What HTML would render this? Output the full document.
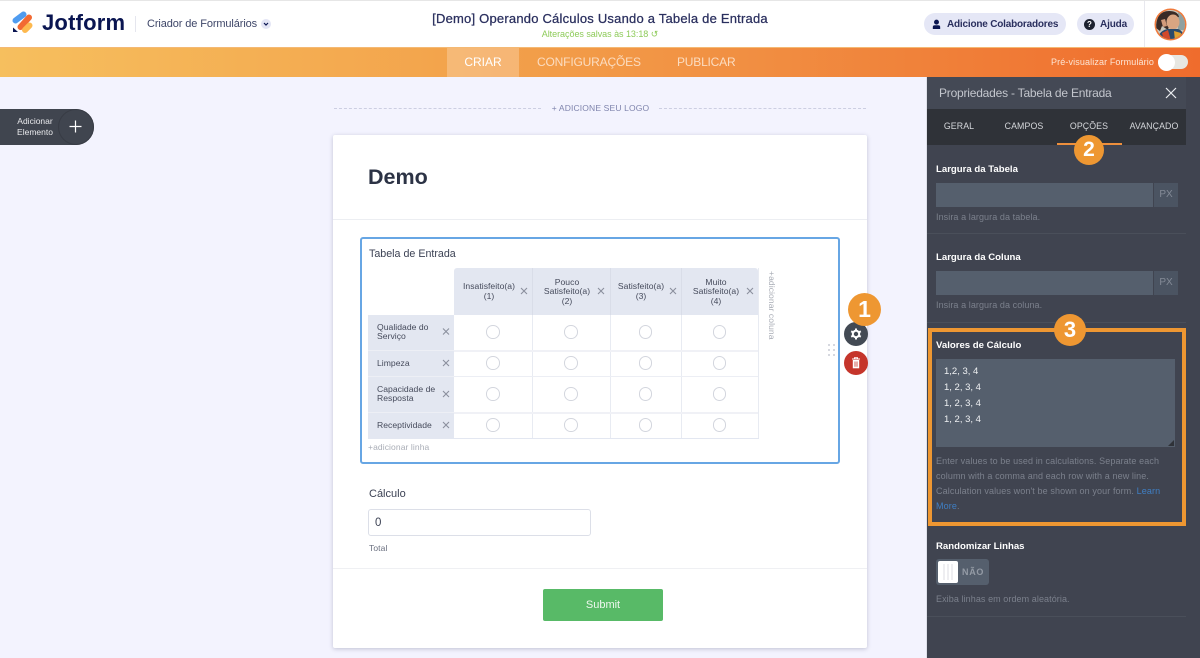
<!DOCTYPE html>
<html><head><meta charset="utf-8">
<style>
*{box-sizing:border-box}
html,body{margin:0;padding:0}
body{width:1200px;height:658px;overflow:hidden;position:relative;background:#f3f3fe;font-family:"Liberation Sans",sans-serif;color:#2c3345}
.a{position:absolute;white-space:nowrap}
.c{text-align:center}
.h{background:#e3e7f1}
.dk{color:#fff;font-weight:bold;font-size:9.6px;letter-spacing:0}
.hint{color:#7b808c;font-size:9px;letter-spacing:.08px}
.inp{background:#555f6d}
.px{background:#4b5462;color:#848b97;font-size:10px;text-align:center;line-height:24px}
.tbl{font-size:8.600px;color:#454a5b;line-height:9.7px;letter-spacing:.03px}
.r{width:13.5px;height:13.5px;border:1px solid #d3d6de;border-radius:50%;background:#fff;position:absolute}
.badge{position:absolute;border-radius:50%;background:#ee9732;color:#fff;font-weight:bold;text-align:center}
.tab{font-size:8.8px;color:#d5d7db;line-height:12px;letter-spacing:.1px;top:119.500px}
</style></head><body>

<!-- top bar -->
<div class="a" style="left:0;top:0;width:1200px;height:47px;background:#fff;border-top:1px solid #e6e6e6"></div>
<svg class="a" style="left:0;top:0" width="40" height="40" viewBox="0 0 40 40">
<path d="M15.500 20.500 L23.500 14.500" stroke="#4f9cf0" stroke-width="6" stroke-linecap="round"/>
<path d="M20.500 27 L29 17.500" stroke="#f26a33" stroke-width="6" stroke-linecap="round"/>
<path d="M25 30 L29.500 25.500" stroke="#fdb94f" stroke-width="6" stroke-linecap="round"/>
<path d="M13 27.500 L13 32 L18 32 Z" fill="#0a1551"/>
</svg>
<div class="a" style="left:42px;top:9px;font-size:22px;font-weight:bold;color:#0a1551;letter-spacing:.2px;line-height:27px">Jotform</div>
<div class="a" style="left:135px;top:16px;width:1px;height:16px;background:#e5e6ee"></div>
<div class="a" style="left:147px;top:17px;font-size:11px;color:#3e4668;letter-spacing:-.11px;line-height:14px">Criador de Formulários</div>
<div class="a" style="left:261px;top:19px;width:10px;height:10px;border-radius:50%;background:#e3e5f5"></div>
<svg class="a" style="left:261px;top:19px" width="10" height="10" viewBox="0 0 10 10"><path d="M3 4 L5 6 L7 4" fill="none" stroke="#0a1551" stroke-width="1.200"/></svg>

<div class="a c" style="left:400px;width:400px;top:11px;font-size:13px;color:#2a2f5e;letter-spacing:.21px;line-height:16px;-webkit-text-stroke:.25px #2a2f5e">[Demo] Operando Cálculos Usando a Tabela de Entrada</div>
<div class="a c" style="left:400px;width:400px;top:28px;font-size:9px;color:#8ecb5a;letter-spacing:-.04px;line-height:12px">Alterações salvas às 13:18 ↺</div>

<div class="a" style="left:924px;top:13px;width:142px;height:22px;border-radius:11px;background:#e5e7f6"></div>
<svg class="a" style="left:932px;top:18.500px" width="9" height="11" viewBox="0 0 11 13"><circle cx="5.500" cy="3.600" r="3" fill="#0a1551"/><path d="M1 12 V9.500 Q1 7.400 3.500 7.400 H7.500 Q10 7.400 10 9.500 V12 Z" fill="#0a1551"/></svg>
<div class="a" style="left:947px;top:18px;font-size:10px;font-weight:bold;color:#2a2f5e;line-height:14px;letter-spacing:-.2px">Adicione Colaboradores</div>
<div class="a" style="left:1077px;top:13px;width:57px;height:22px;border-radius:11px;background:#e5e7f6"></div>
<div class="a c" style="left:1084px;top:18.500px;width:11px;height:11px;border-radius:50%;background:#1d2230;color:#fff;font-size:8px;font-weight:bold;line-height:11px">?</div>
<div class="a" style="left:1100px;top:18px;font-size:10px;font-weight:bold;color:#2a2f5e;line-height:14px;letter-spacing:-.15px">Ajuda</div>
<div class="a" style="left:1144px;top:1px;width:1px;height:46px;background:#e8e8ee"></div>
<svg class="a" style="left:1154px;top:8px" width="33" height="33" viewBox="0 0 33 33">
<defs><clipPath id="cp"><circle cx="16.500" cy="16.500" r="14.500"/></clipPath></defs>
<circle cx="16.500" cy="16.500" r="16" fill="#f0793a"/>
<g clip-path="url(#cp)">
<rect width="33" height="33" fill="#c9c6bb"/>
<rect x="24" y="4" width="9" height="18" fill="#8fa0a0"/>
<path d="M2 20 Q2 3 15 3 Q24 3 25 9 L17 10 L14 22 L8 18 L6 23 Z" fill="#3a2b26"/>
<ellipse cx="19" cy="14" rx="6.500" ry="7.500" fill="#d9a582"/>
<path d="M7 12 L11 11 L13 18 L9 19 Z" fill="#d19a7a"/>
<path d="M3 33 Q5 22 14 21 L24 21 Q30 23 31 33 Z" fill="#2b4a6b"/>
<path d="M8 25 L14 22 L17 33 L10 33 Z" fill="#d24a2b"/>
<path d="M20 23 L27 25 L26 33 L21 33 Z" fill="#e0a02f"/>
</g></svg>

<!-- orange bar -->
<div class="a" style="left:0;top:47px;width:1200px;height:30px;background:linear-gradient(90deg,#f6bf5e 0%,#f3a44c 37%,#f18f42 62%,#ef6c2d 100%);border-top:1px solid #f4b974"></div>
<div class="a" style="left:447px;top:48px;width:72px;height:29px;background:rgba(255,255,255,.24)"></div>
<div class="a c" style="left:447px;width:72px;top:55px;font-size:12px;color:#fff;line-height:15px;letter-spacing:0">CRIAR</div>
<div class="a" style="left:537px;top:55px;font-size:12px;color:#fbdcc0;line-height:15px;letter-spacing:-.17px">CONFIGURAÇÕES</div>
<div class="a" style="left:677px;top:55px;font-size:12px;color:#fbdcc0;line-height:15px;letter-spacing:-.2px">PUBLICAR</div>
<div class="a" style="left:1051px;top:56px;font-size:9px;color:#fde5d4;line-height:12px;letter-spacing:.12px">Pré-visualizar Formulário</div>
<div class="a" style="left:1158px;top:55px;width:30px;height:14px;border-radius:7px;background:#e7e7e2"></div>
<div class="a" style="left:1158px;top:54px;width:17px;height:17px;border-radius:50%;background:#fff"></div>

<!-- add element -->
<div class="a" style="left:0;top:109px;width:94px;height:36px;background:#40454f;border-radius:0 18px 18px 0"></div>
<div class="a" style="left:58px;top:109px;width:36px;height:36px;border-radius:50%;border:1px solid #383c45"></div>
<div class="a c" style="left:10px;width:50px;top:116px;font-size:8.500px;color:#e8e9ec;line-height:11px">Adicionar<br>Elemento</div>
<svg class="a" style="left:69px;top:120px" width="13" height="13" viewBox="0 0 13 13"><path d="M6.500 0.500 V12.500 M0.500 6.500 H12.500" stroke="#fff" stroke-width="1.200"/></svg>

<!-- logo -->
<div class="a" style="left:334px;top:108px;width:207px;border-top:1px dashed #cccee2"></div>
<div class="a" style="left:659px;top:108px;width:207px;border-top:1px dashed #cccee2"></div>
<div class="a c" style="left:534px;width:133px;top:103px;font-size:8.500px;color:#7f84ad;line-height:11px;letter-spacing:.15px">+ ADICIONE SEU LOGO</div>

<!-- form card -->
<div class="a" style="left:333px;top:135px;width:534px;height:513px;background:#fff;box-shadow:0 1px 4px rgba(60,65,100,.28);border-radius:2px"></div>
<div class="a" style="left:368px;top:164px;font-size:21.500px;font-weight:bold;color:#2c3345;line-height:27px">Demo</div>
<div class="a" style="left:333px;top:219px;width:534px;height:1px;background:#eceef2"></div>

<div class="a" style="left:360px;top:237px;width:480px;height:227px;border:2px solid #67a6e4;border-radius:3px"></div>
<div class="a" style="left:369px;top:246.500px;font-size:10.700px;color:#3c4254;line-height:14px">Tabela de Entrada</div>

<!-- table backgrounds -->
<div class="a h" style="left:454px;top:268px;width:304px;height:47px;border-radius:3px 3px 0 0"></div>
<div class="a h" style="left:368px;top:315px;width:86px;height:124px"></div>
<div class="a" style="left:532px;top:268px;width:1px;height:47px;background:#d9dde8"></div>
<div class="a" style="left:610px;top:268px;width:1px;height:47px;background:#d9dde8"></div>
<div class="a" style="left:681px;top:268px;width:1px;height:47px;background:#d9dde8"></div>
<div class="a" style="left:532px;top:315px;width:1px;height:124px;background:#e8ebf2"></div>
<div class="a" style="left:610px;top:315px;width:1px;height:124px;background:#e8ebf2"></div>
<div class="a" style="left:681px;top:315px;width:1px;height:124px;background:#e8ebf2"></div>
<div class="a" style="left:758px;top:268px;width:1px;height:171px;background:#e8ebf2"></div>
<div class="a" style="left:454px;top:350px;width:304px;height:2px;background:#f0f1f6"></div>
<div class="a" style="left:454px;top:376px;width:304px;height:1px;background:#eceef4"></div>
<div class="a" style="left:454px;top:412px;width:304px;height:2px;background:#f0f1f6"></div>
<div class="a" style="left:368px;top:350px;width:86px;height:1px;background:#edeff5"></div>
<div class="a" style="left:368px;top:376px;width:86px;height:1px;background:#edeff5"></div>
<div class="a" style="left:368px;top:412px;width:86px;height:1px;background:#edeff5"></div>
<div class="a" style="left:454px;top:438px;width:305px;height:1px;background:#e3e7f1"></div>

<!-- headers -->
<div class="a c tbl" style="left:459px;width:60px;top:282px">Insatisfeito(a)<br>(1)</div>
<div class="a c tbl" style="left:537px;width:60px;top:277.500px">Pouco<br>Satisfeito(a)<br>(2)</div>
<div class="a c tbl" style="left:611px;width:60px;top:282px">Satisfeito(a)<br>(3)</div>
<div class="a c tbl" style="left:686px;width:60px;top:277.500px">Muito<br>Satisfeito(a)<br>(4)</div>
<!-- row labels -->
<div class="a tbl" style="left:377px;top:322.500px">Qualidade do<br>Serviço</div>
<div class="a tbl" style="left:377px;top:358.500px">Limpeza</div>
<div class="a tbl" style="left:377px;top:384.500px">Capacidade de<br>Resposta</div>
<div class="a tbl" style="left:377px;top:420.500px">Receptividade</div>
<!-- x marks -->
<svg class="a" style="left:0;top:0" width="800" height="440" viewBox="0 0 800 440" fill="none" stroke="#8b909e" stroke-width="1.100">
<path d="M521 288 l6 6 m0 -6 l-6 6"/>
<path d="M598 288 l6 6 m0 -6 l-6 6"/>
<path d="M670 288 l6 6 m0 -6 l-6 6"/>
<path d="M747 288 l6 6 m0 -6 l-6 6"/>
<path d="M443 328.500 l6 6 m0 -6 l-6 6"/>
<path d="M443 360 l6 6 m0 -6 l-6 6"/>
<path d="M443 391 l6 6 m0 -6 l-6 6"/>
<path d="M443 422 l6 6 m0 -6 l-6 6"/>
</svg>
<!-- radios -->
<div class="r" style="left:486px;top:325px"></div><div class="r" style="left:564px;top:325px"></div><div class="r" style="left:638.500px;top:325px"></div><div class="r" style="left:712.500px;top:325px"></div>
<div class="r" style="left:486px;top:356px"></div><div class="r" style="left:564px;top:356px"></div><div class="r" style="left:638.500px;top:356px"></div><div class="r" style="left:712.500px;top:356px"></div>
<div class="r" style="left:486px;top:387px"></div><div class="r" style="left:564px;top:387px"></div><div class="r" style="left:638.500px;top:387px"></div><div class="r" style="left:712.500px;top:387px"></div>
<div class="r" style="left:486px;top:418px"></div><div class="r" style="left:564px;top:418px"></div><div class="r" style="left:638.500px;top:418px"></div><div class="r" style="left:712.500px;top:418px"></div>

<div class="a" style="left:368px;top:442px;font-size:8.500px;color:#a9adb6;line-height:11px;letter-spacing:.1px">+adicionar linha</div>
<div class="a" style="left:766px;top:271px;font-size:8.500px;color:#a9adb6;line-height:11px;letter-spacing:.1px;writing-mode:vertical-rl;width:11px">+adicionar coluna</div>

<!-- drag dots -->
<svg class="a" style="left:827px;top:343px" width="10" height="15" viewBox="0 0 10 15" fill="#d6d8df"><rect x="1" y="1" width="2" height="2"/><rect x="6" y="1" width="2" height="2"/><rect x="1" y="6" width="2" height="2"/><rect x="6" y="6" width="2" height="2"/><rect x="1" y="11" width="2" height="2"/><rect x="6" y="11" width="2" height="2"/></svg>

<!-- gear / trash -->
<div class="a" style="left:844px;top:322px;width:24px;height:24px;border-radius:50%;background:#434a54"></div>
<svg class="a" style="left:850px;top:328px" width="12" height="12" viewBox="0 0 12 12"><circle cx="6" cy="6" r="3.200" fill="none" stroke="#fff" stroke-width="2"/><path d="M6 0.500 V2.500 M6 9.500 V11.500 M1.200 3.200 L3 4.200 M9 7.800 L10.800 8.800 M1.200 8.800 L3 7.800 M9 4.200 L10.800 3.200" stroke="#fff" stroke-width="2"/></svg>
<div class="a" style="left:844px;top:351px;width:24px;height:24px;border-radius:50%;background:#c5352b"></div>
<svg class="a" style="left:851px;top:357px" width="10" height="12" viewBox="0 0 10 12"><path d="M1 2 H9 M3.500 2 V0.800 H6.500 V2" stroke="#fff" stroke-width="1" fill="none"/><path d="M1.800 3 H8.200 V11.300 H1.800 Z" fill="#fff"/><path d="M4 4.500 V9.800 M6 4.500 V9.800" stroke="#c5352b" stroke-width=".8"/></svg>
<div class="badge" style="left:848px;top:293px;width:33px;height:33px;font-size:23px;line-height:33px">1</div>

<!-- calc -->
<div class="a" style="left:369px;top:487px;font-size:11px;color:#3c4254;line-height:14px">Cálculo</div>
<div class="a" style="left:368px;top:509px;width:223px;height:27px;border:1px solid #dcdfe8;border-radius:3px;background:#fff"></div>
<div class="a" style="left:375px;top:516px;font-size:11.500px;color:#3c4254;line-height:14px">0</div>
<div class="a" style="left:369px;top:543px;font-size:8.500px;color:#6b7080;line-height:11px;letter-spacing:.1px">Total</div>
<div class="a" style="left:333px;top:568px;width:534px;height:1px;background:#eff0f3"></div>
<div class="a c" style="left:543px;top:589px;width:120px;height:32px;background:#58ba67;border-radius:2px;color:#eef8ef;font-size:11px;line-height:33px">Submit</div>

<!-- panel -->
<div class="a" style="left:927px;top:77px;width:273px;height:581px;background:#404450"></div>
<div class="a" style="left:926px;top:77px;width:1px;height:581px;background:#dfe1ea"></div>
<div class="a" style="left:927px;top:77px;width:259px;height:32px;background:#444955"></div>
<div class="a" style="left:939px;top:85px;font-size:12px;color:#c3c6cd;line-height:16px;letter-spacing:-.21px">Propriedades - Tabela de Entrada</div>
<svg class="a" style="left:1164.500px;top:87px" width="12" height="12" viewBox="0 0 12 12"><path d="M1 1 L11 11 M11 1 L1 11" stroke="#eceef2" stroke-width="1.200"/></svg>
<div class="a" style="left:927px;top:109px;width:259px;height:36px;background:#2f3238"></div>
<div class="a c tab" style="left:927px;width:64px">GERAL</div>
<div class="a c tab" style="left:992px;width:64px">CAMPOS</div>
<div class="a c tab" style="left:1057px;width:64px">OPÇÕES</div>
<div class="a c tab" style="left:1122px;width:64px">AVANÇADO</div>
<div class="a" style="left:1057px;top:143px;width:65px;height:2px;background:#ee8f3c"></div>
<div class="badge" style="left:1074px;top:135px;width:30px;height:30px;font-size:21px;line-height:30px">2</div>

<div class="a dk" style="left:936px;top:163px;line-height:13px">Largura da Tabela</div>
<div class="a inp" style="left:936px;top:183px;width:217px;height:24px"></div>
<div class="a px" style="left:1154px;top:183px;width:24px;height:24px">PX</div>
<div class="a hint" style="left:936px;top:211px;line-height:12px">Insira a largura da tabela.</div>
<div class="a" style="left:927px;top:233px;width:259px;height:1px;background:#4a4f5a"></div>

<div class="a dk" style="left:936px;top:251px;line-height:13px">Largura da Coluna</div>
<div class="a inp" style="left:936px;top:271px;width:217px;height:24px"></div>
<div class="a px" style="left:1154px;top:271px;width:24px;height:24px">PX</div>
<div class="a hint" style="left:936px;top:299px;line-height:12px">Insira a largura da coluna.</div>
<div class="a" style="left:927px;top:322px;width:259px;height:1px;background:#4a4f5a"></div>

<div class="a" style="left:928px;top:328px;width:258px;height:198px;border:4px solid #ee9732"></div>
<div class="badge" style="left:1054px;top:314px;width:32px;height:32px;font-size:22px;line-height:32px">3</div>
<div class="a dk" style="left:936px;top:339px;line-height:13px">Valores de Cálculo</div>
<div class="a inp" style="left:936px;top:359px;width:239px;height:88px"></div>
<div class="a" style="left:944px;top:364px;font-size:9.500px;color:#eef0f2;line-height:16px;letter-spacing:0;white-space:pre">1,2, 3, 4
1, 2, 3, 4
1, 2, 3, 4
1, 2, 3, 4</div>
<svg class="a" style="left:1168px;top:440px" width="6" height="6" viewBox="0 0 6 6"><path d="M6 0 V6 H0 Z" fill="#2f3238"/></svg>
<div class="a hint" style="left:936px;top:454px;line-height:15px;font-size:9px;letter-spacing:.11px">Enter values to be used in calculations. Separate each<br>column with a comma and each row with a new line.<br>Calculation values won't be shown on your form. <span style="color:#3f7fc4">Learn</span><br><span style="color:#3f7fc4">More</span>.</div>

<div class="a dk" style="left:936px;top:540px;line-height:13px">Randomizar Linhas</div>
<div class="a" style="left:936px;top:559px;width:53px;height:26px;border-radius:3px;background:#555f6d"></div>
<div class="a" style="left:938px;top:561px;width:20px;height:22px;border-radius:2px;background:#fff"></div>
<svg class="a" style="left:942px;top:564px" width="12" height="16" viewBox="0 0 12 16"><path d="M2 0 V16 M6 0 V16 M10 0 V16" stroke="#dcdee3" stroke-width="1"/></svg>
<div class="a" style="left:962px;top:566px;font-size:9px;font-weight:bold;color:#949ba5;line-height:12px;letter-spacing:.7px">NÃO</div>
<div class="a hint" style="left:936px;top:593px;line-height:12px">Exiba linhas em ordem aleatória.</div>
<div class="a" style="left:927px;top:616px;width:259px;height:1px;background:#4a4f5a"></div>

</body></html>
